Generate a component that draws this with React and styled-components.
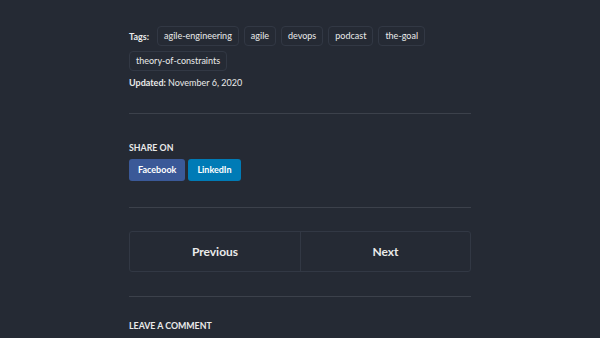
import React from 'react';
import styled, { createGlobalStyle } from 'styled-components';

const GlobalStyle = createGlobalStyle`
  html, body {
    margin: 0;
    padding: 0;
    background: #252a34;
  }
  body {
    font-family: Lato, "Open Sans", sans-serif;
    color: #eaeaea;
  }
`;

const tags = ['agile-engineering', 'agile', 'devops', 'podcast', 'the-goal', 'theory-of-constraints'];

export default function App() {
  return (
    <>
      <GlobalStyle />
      <Page>
        <Content>
          <TagList>
            <Label>Tags:</Label>
            {tags.map(t => (
              <Tag key={t}>{t}</Tag>
            ))}
          </TagList>
          <Meta>
            <strong>Updated:</strong> November 6, 2020
          </Meta>
          <Rule $top={23} $bottom={28} />
          <Heading>Share on</Heading>
          <ShareRow>
            <ShareButton $bg="#3b5998">Facebook</ShareButton>
            <ShareButton $bg="#007bb6">LinkedIn</ShareButton>
          </ShareRow>
          <Rule $top={26} $bottom={23} />
          <Pager>
            <PagerLink>Previous</PagerLink>
            <PagerLink>Next</PagerLink>
          </Pager>
          <Rule $top={24} $bottom={23} />
          <Heading>Leave a comment</Heading>
        </Content>
      </Page>
    </>
  );
}

const Page = styled.div`
  width: 600px;
  height: 338px;
  overflow: hidden;
`;

const Content = styled.div`
  width: 342px;
  margin-left: 129px;
  padding-top: 26px;
`;

const TagList = styled.div`
  display: flex;
  flex-wrap: wrap;
  align-items: center;
  gap: 5px 5px;
  font-size: 9px;
`;

const Label = styled.strong`
  font-weight: 700;
  margin-right: 3px;
`;

const Tag = styled.span`
  display: inline-block;
  padding: 3px 6px;
  line-height: 12px;
  border: 1px solid #323844;
  border-radius: 4px;
  color: #eaeaea;
`;

const Meta = styled.p`
  margin: 5px 0 0;
  font-size: 9px;
  line-height: 14px;

  strong {
    font-weight: 700;
  }
`;

const Rule = styled.hr`
  border: 0;
  border-top: 1px solid #3c414b;
  margin: ${p => p.$top}px 0 ${p => p.$bottom}px;
`;

const Heading = styled.h4`
  margin: 0 0 5px;
  font-size: 8.8px;
  font-weight: 700;
  text-transform: uppercase;
  line-height: 12px;
`;

const ShareRow = styled.div`
  display: flex;
  gap: 3px;
`;

const ShareButton = styled.a`
  display: inline-block;
  padding: 5px 9px;
  line-height: 12px;
  font-size: 9px;
  font-weight: 700;
  color: #fff;
  background: ${p => p.$bg};
  border-radius: 3px;
`;

const Pager = styled.nav`
  display: grid;
  grid-template-columns: 1fr 1fr;
  border: 1px solid #323844;
  border-radius: 3px;
`;

const PagerLink = styled.a`
  display: flex;
  align-items: center;
  justify-content: center;
  height: 39px;
  font-size: 12px;
  font-weight: 700;
  color: #eaeaea;
  & + & {
    border-left: 1px solid #323844;
  }
`;
